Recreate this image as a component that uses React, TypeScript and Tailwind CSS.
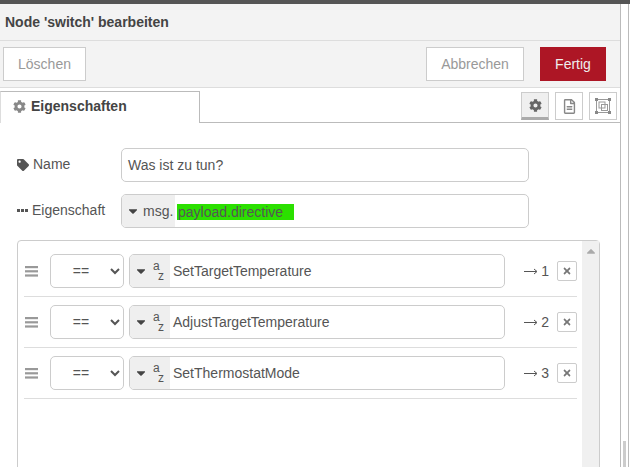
import React from "react";
import { FaCog, FaTag, FaCaretDown, FaTimes, FaRegFileAlt, FaCaretUp } from "react-icons/fa";

function Frame() {
  return (
    <svg width="16" height="16" viewBox="0 0 16 16" fill="none">
      <rect x="1.5" y="1.5" width="13" height="13" stroke="#999" strokeWidth="1" />
      <rect x="4" y="4" width="6" height="6" stroke="#999" strokeWidth="1" />
      <rect x="6.5" y="6.5" width="6" height="6" stroke="#999" strokeWidth="1" />
      <rect x="0" y="0" width="3" height="3" fill="#888" />
      <rect x="13" y="0" width="3" height="3" fill="#888" />
      <rect x="0" y="13" width="3" height="3" fill="#888" />
      <rect x="13" y="13" width="3" height="3" fill="#888" />
    </svg>
  );
}

function Dots() {
  return (
    <svg width="11" height="4" viewBox="0 0 11 4" className="mr-[4px] mt-[1px]">
      <rect x="0" y="0" width="3" height="3" fill="#555" />
      <rect x="4" y="0" width="3" height="3" fill="#555" />
      <rect x="8" y="0" width="3" height="3" fill="#555" />
    </svg>
  );
}

function Grip() {
  return (
    <svg width="13" height="11" viewBox="0 0 13 11" className="ml-[1px] mr-[12px]">
      <rect x="0" y="0" width="13" height="2.2" fill="#999" />
      <rect x="0" y="4.2" width="13" height="2.2" fill="#999" />
      <rect x="0" y="8.4" width="13" height="2.2" fill="#999" />
    </svg>
  );
}

function Arrow() {
  return (
    <svg width="13" height="7" viewBox="0 0 13 7" className="mr-[4px]">
      <path d="M0 3.5H12.5" stroke="#555" strokeWidth="1" />
      <path d="M10 1L13 3.5L10 6" stroke="#555" strokeWidth="1" fill="none" />
    </svg>
  );
}

function Rule({ value, out }: { value: string; out: number }) {
  return (
    <div className="flex items-center h-[51px] border-b border-[#ddd] mr-[5px] ml-[6px] shrink-0">
      <Grip />
      <select className="w-[74px] h-[34px] bg-white border border-[#ccc] rounded-[5px] text-[#555] text-[14px] text-center mr-[5px] outline-none" defaultValue="==">
        <option>==</option>
      </select>
      <div className="w-[376px] h-[34px] border border-[#ccc] rounded-[5px] flex overflow-hidden">
        <div className="w-[40px] bg-[#efefef] flex items-center pl-[5px] shrink-0">
          <FaCaretDown className="text-[#444] w-[12px] h-[14px]" />
          <div className="relative ml-[6px] w-[12px] h-[22px] text-[12px] leading-none text-[#555]">
            <span className="absolute left-0 top-[0px]">a</span>
            <span className="absolute left-[5px] top-[10px]">z</span>
          </div>
        </div>
        <div className="flex-1 flex items-center pl-[3px] text-[14px] text-[#555]">{value}</div>
      </div>
      <div className="w-[52px] flex items-center justify-end text-[14px] text-[#555] pr-[8px] shrink-0">
        <Arrow />
        <span>{out}</span>
      </div>
      <div className="w-[20px] h-[20px] border border-[#ccc] rounded-[2px] flex items-center justify-center shrink-0">
        <FaTimes className="text-[#777] w-[10px] h-[10px]" />
      </div>
    </div>
  );
}

export default function App() {
  return (
    <div className="relative w-[630px] h-[467px] overflow-hidden bg-white font-['Liberation_Sans',Arial,sans-serif] text-[14px] text-[#555] flex flex-col">
      <div className="h-[4px] bg-[#555] shrink-0" />
      <div className="flex flex-1 min-h-0">
        <div className="w-[621px] shrink-0 border-r border-[#bbb] flex flex-col min-h-0">
          <div className="h-[37px] shrink-0 bg-[#f3f3f3] border-b border-[#ddd] flex items-center pl-[5px] font-bold text-[14px] text-[#444]">
            Node 'switch' bearbeiten
          </div>
          <div className="h-[47px] shrink-0 bg-[#f3f3f3] border-b border-[#ddd] flex items-center pl-[3px] pr-[14px]">
            <button className="w-[83px] h-[34px] bg-white border border-[#ccc] text-[#999] text-[14px]">Löschen</button>
            <button className="ml-auto w-[98px] h-[34px] bg-white border border-[#ccc] text-[#999] text-[14px]">Abbrechen</button>
            <button className="ml-[16px] w-[66px] h-[34px] bg-[#ad1625] text-[#eee] text-[14px]">Fertig</button>
          </div>
          <div className="h-[32px] shrink-0 mt-[3px] flex border-b border-[#bbb]">
            <div className="w-[200px] h-[32px] bg-white border border-b-0 border-[#bbb] border-l-[#ddd] flex items-center pl-[12px] pb-[2px] font-bold text-[14px] text-[#444]">
              <FaCog className="text-[#888] w-[13px] h-[13px] mr-[5px]" />
              Eigenschaften
            </div>
            <div className="ml-auto flex gap-[6px] pr-[3px] pt-[1px]">
              <div className="w-[28px] h-[28px] bg-[#efefef] border border-[#ccc] border-b-[3px] border-b-[#aaa] flex items-center justify-center">
                <FaCog className="text-[#666] w-[13px] h-[13px]" />
              </div>
              <div className="w-[28px] h-[28px] border border-[#ccc] flex items-center justify-center">
                <FaRegFileAlt className="text-[#888] w-[13px] h-[15px]" />
              </div>
              <div className="w-[28px] h-[28px] border border-[#ccc] flex items-center justify-center">
                <Frame />
              </div>
            </div>
          </div>
          <div className="flex-1 min-h-0 pl-[17px] pt-[25px] flex flex-col overflow-hidden">
            <div className="flex items-center h-[34px] shrink-0">
              <div className="w-[104px] flex items-center text-[14px] -mt-[1px]">
                <FaTag className="w-[12px] h-[12px] text-[#555] mr-[4px]" />
                Name
              </div>
              <div className="w-[408px] h-[34px] border border-[#ccc] rounded-[5px] flex items-center pl-[6px] text-[#555]">Was ist zu tun?</div>
            </div>
            <div className="flex items-center h-[34px] mt-[12px] shrink-0">
              <div className="w-[104px] flex items-center text-[14px] -mt-[1px]">
                <Dots />
                Eigenschaft
              </div>
              <div className="w-[408px] h-[34px] border border-[#ccc] rounded-[5px] flex overflow-hidden">
                <div className="w-[53px] bg-[#efefef] flex items-center pl-[5px] shrink-0">
                  <FaCaretDown className="text-[#444] w-[12px] h-[14px] mr-[4px]" />
                  msg.
                </div>
                <div className="flex items-center pl-[2px]">
                  <span className="bg-[#2be000] w-[117px] h-[16px] leading-[16px] pl-[1px] text-[#555] mt-[1px]">payload.directive</span>
                </div>
              </div>
            </div>
            <div className="w-[583px] flex-1 mt-[12px] -mb-[4px] border border-[#ccc] rounded-[4px] flex min-h-0">
              <div className="flex-1 pt-[5px] flex flex-col min-w-0">
                <Rule value="SetTargetTemperature" out={1} />
                <Rule value="AdjustTargetTemperature" out={2} />
                <Rule value="SetThermostatMode" out={3} />
              </div>
              <div className="w-[17px] shrink-0 bg-[#f0f0f0] flex justify-center pt-[3px]">
                <FaCaretUp className="text-[#aaa] w-[12px] h-[14px]" />
              </div>
            </div>
          </div>
        </div>
        <div className="w-[8px] shrink-0 border-r border-[#bbb] relative">
          <div className="absolute left-[2px] top-[437px] w-[3px] h-[30px] bg-[#ccc]" />
        </div>
      </div>
    </div>
  );
}
